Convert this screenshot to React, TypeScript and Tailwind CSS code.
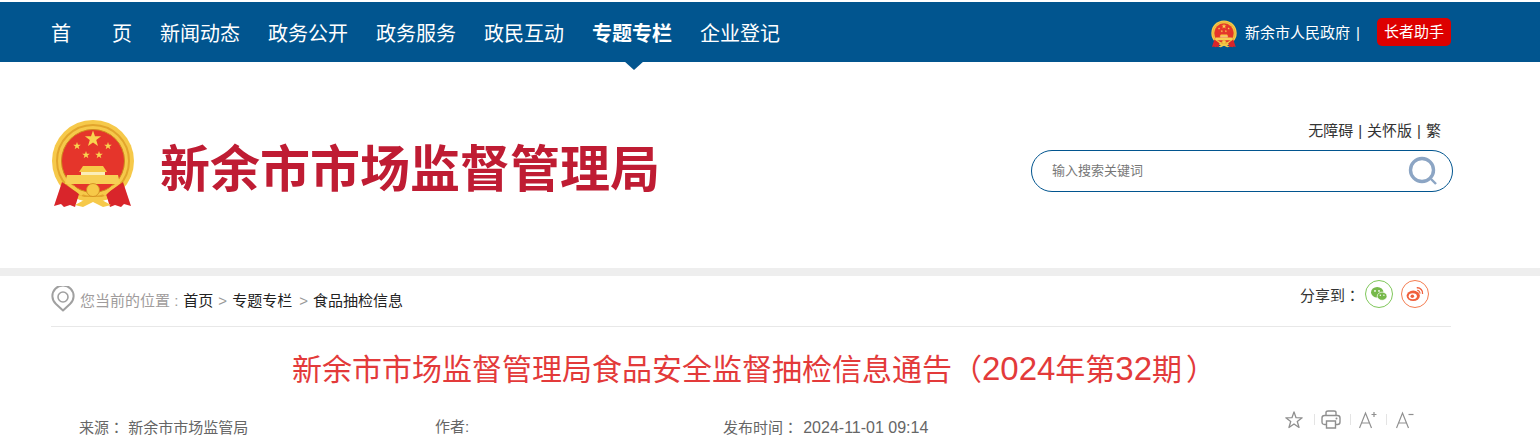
import React from 'react';

const cjk = "font-['Liberation_Sans','Noto_Sans_CJK_SC',sans-serif]";
// TC punctuation sits centred in its cell, like the reference's
const punct = "font-['Noto_Sans_CJK_TC',sans-serif]";

const navItems = ['新闻动态', '政务公开', '政务服务', '政民互动', '专题专栏', '企业登记'];

const star = (cx: number, cy: number, r: number, rot = 0) => {
  const pts: string[] = [];
  for (let i = 0; i < 10; i++) {
    const rad = i % 2 === 0 ? r : r * 0.4;
    const a = ((-90 + i * 36 + rot) * Math.PI) / 180;
    pts.push(`${(cx + rad * Math.cos(a)).toFixed(2)},${(cy + rad * Math.sin(a)).toFixed(2)}`);
  }
  return pts.join(' ');
};

// national emblem, drawn on a 84x88 box
const Emblem: React.FC<{ className?: string }> = ({ className }) => (
  <svg viewBox="0 0 84 88" className={className}>
    <circle cx="42" cy="41" r="41" fill="#f6c94a" />
    <circle cx="42" cy="41" r="36" fill="none" stroke="#e2a52c" strokeWidth="2" />
    <circle cx="42" cy="41" r="31.5" fill="#e5352b" stroke="#d08a1e" strokeWidth="1" />
    <polygon points={star(42, 19, 8.5)} fill="#f9d44f" />
    <polygon points={star(26, 26, 4)} fill="#f9d44f" />
    <polygon points={star(57, 26, 4)} fill="#f9d44f" />
    <polygon points={star(35, 35, 4)} fill="#f9d44f" />
    <polygon points={star(48, 35, 4)} fill="#f9d44f" />
    {/* gate */}
    <path d="M28 52 L32 46 H52 L56 52 Z" fill="#f7c948" />
    <rect x="30" y="52" width="24" height="3" fill="#fbeeb8" />
    <path d="M16 55 H67 L69 64 H14 Z" fill="#f7cf55" />
    {/* drapes */}
    <path d="M11 62 L3 86 L10 84 L13 87 L19 85 L24 87 L28 74 Z" fill="#d9252b" />
    <path d="M72 62 L80 86 L73 84 L70 87 L64 85 L59 87 L55 74 Z" fill="#d9252b" />
    {/* wheat and wheel */}
    <path d="M22 64 C27 71 31 72 35 72 L30 76 L25 71 Z" fill="#f6c94a" />
    <path d="M62 64 C57 71 53 72 49 72 L54 76 L59 71 Z" fill="#f6c94a" />
    <circle cx="42" cy="70" r="6.5" fill="#f7c948" stroke="#d08a1e" strokeWidth="0.8" />
    <rect x="28" y="77" width="28" height="2.5" fill="#f6c94a" />
    <path d="M24 85 L35 79 H49 L60 85 L52 87 L42 82 L32 87 Z" fill="#f6c94a" />
  </svg>
);

const Divider = () => <span className="h-[11px] w-px bg-[#e4e4e4]" />;

export default function App() {
  return (
    <div className={`h-[447px] w-[1540px] overflow-hidden bg-white ${cjk}`}>
      {/* top nav */}
      <div className="relative mt-[2px] flex h-[60px] items-center bg-[#01558f] pl-[51px] pr-[89px] pt-[4px] text-white">
        <a className="flex w-[81px] justify-between text-[20px]">
          <span>首</span>
          <span>页</span>
        </a>
        {navItems.map((item) => (
          <a
            key={item}
            className={`relative ml-[28px] w-[80px] whitespace-nowrap text-[20px] ${item === '专题专栏' ? 'font-bold' : ''}`}
          >
            {item}
            {item === '专题专栏' && (
              <span className="absolute left-[32px] top-[42px] h-0 w-0 border-x-[10px] border-t-[9px] border-x-transparent border-t-[#01558f]" />
            )}
          </a>
        ))}
        <div className="-mt-[4px] ml-auto flex items-center">
          <Emblem className="mt-[3px] h-[28px] w-[26px]" />
          <span className="ml-[8px] mt-[2px] whitespace-nowrap text-[15px]">
            新余市人民政府 <span className="ml-[2px]">|</span>
          </span>
          <span className="ml-[17px] flex h-[28px] w-[74px] items-center justify-center rounded-[5px] bg-[#dd0000] text-[15px]">
            长者助手
          </span>
        </div>
      </div>

      {/* masthead */}
      <div className="flex h-[206px] items-start justify-between pl-[51px] pr-[87px]">
        <div className="mt-[58px] flex items-center">
          <Emblem className="h-[88px] w-[84px]" />
          <h1 className="ml-[25px] mt-[11px] whitespace-nowrap text-[50px] font-bold leading-none tracking-normal text-[#bf1c33]">
            新余市市场监督管理局
          </h1>
        </div>
        <div className="mt-[59px] flex w-[422px] flex-col items-end">
          <div className="mr-[12px] whitespace-nowrap text-[15px] leading-[20px] text-[#333]">
            无障碍<span className="mx-[5px]">|</span>关怀版<span className="mx-[5px]">|</span>繁
          </div>
          <div className="mt-[9px] flex h-[42px] w-[422px] items-center justify-between rounded-full border border-[#01558f] pl-[20px] pr-[14px]">
            <span className="text-[13px] text-[#777]">输入搜索关键词</span>
            <svg viewBox="0 0 30 30" className="h-[30px] w-[30px]">
              <circle cx="14" cy="14" r="11.5" fill="none" stroke="#8ca5c4" strokeWidth="3.4" />
              <path d="M23 23 L28 28" stroke="#8ca5c4" strokeWidth="2.4" />
            </svg>
          </div>
        </div>
      </div>

      <div className="h-[8px] bg-[#eeeeee]" />

      <div className="ml-[51px] w-[1400px]">
        {/* breadcrumb + share */}
        <div className="flex h-[51px] items-start justify-between border-b border-[#e8e8e8]">
          <div className="mt-[10px] flex items-center text-[15px]">
            <svg viewBox="0 0 24 26" className="h-[26px] w-[24px]">
              <path
                d="M12 24.5 L5 18 A10.6 10.6 0 1 1 19 18 Z"
                fill="none"
                stroke="#a0a0a0"
                strokeWidth="2"
                strokeLinejoin="round"
              />
              <circle cx="12" cy="11" r="5" fill="none" stroke="#a0a0a0" strokeWidth="1.6" />
            </svg>
            <span className="ml-[5px] mt-[4px] whitespace-nowrap text-[#a09c9c]">您当前的位置 :</span>
            <span className="ml-[5px] mt-[4px] whitespace-nowrap text-[#222]">首页</span>
            <span className="ml-[5px] mr-[5px] mt-[4px] text-[#999]">&gt;</span>
            <span className="mt-[4px] whitespace-nowrap text-[#222]">专题专栏</span>
            <span className="ml-[7px] mr-[5px] mt-[4px] text-[#999]">&gt;</span>
            <span className="mt-[4px] whitespace-nowrap text-[#222]">食品抽检信息</span>
          </div>
          <div className="mr-[22px] mt-[4px] flex items-center">
            <span className="whitespace-nowrap pt-[3px] text-[15px] text-[#333]">
              分享到<span className={punct}>：</span>
            </span>
            <span className="ml-[5px] flex h-[28px] w-[28px] items-center justify-center rounded-full border border-[#7fc75a]">
              <svg viewBox="0 0 20 18" className="h-[16px] w-[18px]">
                <ellipse cx="8" cy="7" rx="7" ry="6" fill="#77b94b" />
                <ellipse cx="13.5" cy="11.5" rx="5.5" ry="4.6" fill="#77b94b" stroke="#fff" strokeWidth="0.8" />
                <circle cx="5.5" cy="5.5" r="1" fill="#fff" />
                <circle cx="10" cy="5.5" r="1" fill="#fff" />
                <circle cx="11.5" cy="10.5" r="0.8" fill="#fff" />
                <circle cx="15.5" cy="10.5" r="0.8" fill="#fff" />
              </svg>
            </span>
            <span className="ml-[8px] flex h-[28px] w-[28px] items-center justify-center rounded-full border border-[#f47c50]">
              <svg viewBox="0 0 20 18" className="h-[16px] w-[18px]">
                <ellipse cx="8" cy="11" rx="7.5" ry="5.8" fill="#f0603c" />
                <ellipse cx="7.5" cy="11.5" rx="4.6" ry="3.4" fill="#fff" />
                <circle cx="7" cy="11.5" r="2" fill="#f0603c" />
                <path d="M12 2 A6 6 0 0 1 18.5 9" fill="none" stroke="#f0603c" strokeWidth="1.5" />
                <path d="M12.5 5 A3 3 0 0 1 15.5 8.5" fill="none" stroke="#f0603c" strokeWidth="1.3" />
              </svg>
            </span>
          </div>
        </div>

        {/* article title */}
        <h2 className="mt-[22px] whitespace-nowrap text-center text-[30px] font-normal leading-[36px] text-[#e33a3a]">
          新余市市场监督管理局食品安全监督抽检信息通告<span className={punct}>（</span>
          <span className="text-[33px] leading-none">2024</span>年第<span className="text-[33px] leading-none">32</span>期
          <span className={`${punct} ml-[4px] mr-[-6px]`}>）</span>
        </h2>

        {/* article meta */}
        <div className="mt-[21px] flex items-start pl-[28px] text-[15px] text-[#666]">
          <span className="mt-[7px] w-[356px] whitespace-nowrap">
            来源<span className={punct}>：</span> 新余市市场监管局
          </span>
          <span className="mt-[7px] w-[288px] whitespace-nowrap">作者:</span>
          <span className="mt-[7px] whitespace-nowrap">
            发布时间<span className={punct}>：</span> <span className="ml-[1px] text-[16px] leading-none">2024-11-01 09:14</span>
          </span>
          <div className="ml-auto mr-[37px] mt-[1px] flex items-center">
            <svg viewBox="0 0 18 18" className="h-[18px] w-[18px]">
              <polygon points={star(9, 9.5, 8.6)} fill="none" stroke="#8f8f8f" strokeWidth="1.3" strokeLinejoin="round" />
            </svg>
            <span className="ml-[11px] flex">
              <Divider />
            </span>
            <svg viewBox="0 0 20 19" className="ml-[6px] h-[19px] w-[20px]">
              <path
                d="M5 5.5 V2.5 Q5 1 7 1 H13 Q15 1 15 2.5 V5.5 M5 14.5 H3.5 Q1 14.5 1 12 V8 Q1 5.5 3.5 5.5 H16.5 Q19 5.5 19 8 V12 Q19 14.5 16.5 14.5 H15 M5.5 11 H14.5 V18 H5.5 Z"
                fill="none"
                stroke="#8f8f8f"
                strokeWidth="1.4"
              />
              <circle cx="15.5" cy="8.5" r="1" fill="#8f8f8f" />
            </svg>
            <span className="ml-[9px] flex">
              <Divider />
            </span>
            <svg viewBox="0 0 18 18" className="ml-[8px] h-[18px] w-[18px]">
              <path d="M0.5 17 L6.5 2 L12.5 17 M2.5 12 H10.5" fill="none" stroke="#8f8f8f" strokeWidth="1.2" />
              <path d="M12.5 3.5 H17.5 M15 1 V6" fill="none" stroke="#8f8f8f" strokeWidth="1.2" />
            </svg>
            <span className="ml-[9px] flex">
              <Divider />
            </span>
            <svg viewBox="0 0 18 18" className="ml-[9px] h-[18px] w-[18px]">
              <path d="M0.5 17 L6.5 2 L12.5 17 M2.5 12 H10.5" fill="none" stroke="#8f8f8f" strokeWidth="1.2" />
              <path d="M12.5 3.5 H17.5" fill="none" stroke="#8f8f8f" strokeWidth="1.2" />
            </svg>
          </div>
        </div>
      </div>
    </div>
  );
}
